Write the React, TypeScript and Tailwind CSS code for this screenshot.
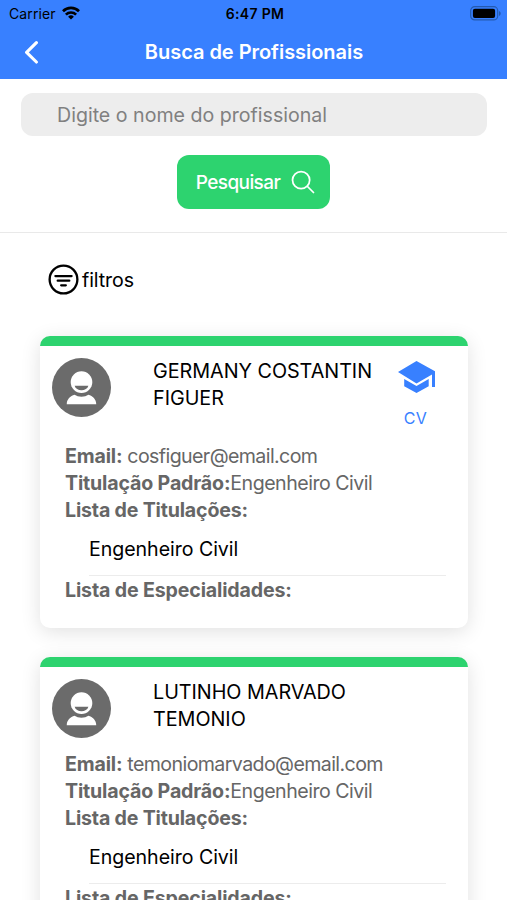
import { IoFilterCircleOutline, IoSearchOutline } from 'react-icons/io5'

type Professional = {
  name: string
  email: string
  degree: string
  hasCv: boolean
}

const professionals: Professional[] = [
  { name: 'GERMANY COSTANTIN FIGUER', email: 'cosfiguer@email.com', degree: 'Engenheiro Civil', hasCv: true },
  { name: 'LUTINHO MARVADO TEMONIO', email: 'temoniomarvado@email.com', degree: 'Engenheiro Civil', hasCv: false },
]

function StatusBar() {
  return (
    <div className="grid h-[27px] grid-cols-3 items-center pl-[9px] pr-[6px] text-[14px] leading-none text-black">
      <div className="flex items-center gap-[6px]">
        <span className="tracking-[0.1px]">Carrier</span>
        <svg viewBox="0 0 18 14" className="-mt-[2px] h-[14px] w-[18px]" fill="none" stroke="currentColor" strokeWidth="2.7">
          <path d="M1 5.200a11.400 11.400 0 0 1 16 0" />
          <path d="M3.900 8.600a7.300 7.300 0 0 1 10.200 0" />
          <path d="M9 13.600 6.100 10.700a4.100 4.100 0 0 1 5.800 0z" fill="currentColor" stroke="none" />
        </svg>
      </div>
      <span className="text-center font-semibold tracking-[0.3px]">6:47 PM</span>
      <svg viewBox="0 0 31 15" className="h-[15px] w-[31px] justify-self-end">
        <rect x="0.700" y="0.700" width="27" height="13.200" rx="4" fill="none" stroke="#245aaf" strokeWidth="1.200" />
        <rect x="2.900" y="2.700" width="22.200" height="9.200" rx="2" fill="#000" />
        <path d="M29 5v5c1-.4 1.700-1.400 1.700-2.500S30 5.400 29 5z" fill="#245aaf" />
      </svg>
    </div>
  )
}

function Avatar() {
  return (
    <svg viewBox="0 0 60 60" className="h-[59px] w-[59px] shrink-0">
      <circle cx="30" cy="30" r="30" fill="#6b6b6b" />
      <circle cx="30" cy="24.500" r="11" fill="#fff" />
      <path d="M23 28.200h14c-.8 3.100-3.700 4.500-7 4.500s-6.200-1.400-7-4.500z" fill="#6b6b6b" />
      <path d="M15 47c0-4.800 3.600-8.600 8-9.600 1.900 1.200 4.200 1.900 7 1.900s5.100-.7 7-1.900c4.400 1 8 4.800 8 9.600z" fill="#fff" />
    </svg>
  )
}

function SchoolIcon() {
  return (
    <svg viewBox="0 0 37 32" className="mt-[3px] h-[32px] w-[37px]" fill="currentColor">
      <path d="M18.500 0 37 10.300V26h-3V13.400L18.500 22.400 0 11z" />
      <path d="m6.200 17.900 12.300 7.200 12.200-7.200v7.300L18.500 32 6.200 25.200z" />
    </svg>
  )
}

function ProfessionalCard({ person }: { person: Professional }) {
  return (
    <article className="h-[292px] overflow-hidden rounded-[10px] border-t-[10px] border-[#2dd36f] bg-white shadow-[0_4px_20px_rgba(0,0,0,0.12)]">
      <div className="flex pl-[12px] pt-[12px]">
        <Avatar />
        <h2 className="ml-[42px] w-[240px] text-[19.800px] leading-[27px] tracking-[-0.04px] text-black">{person.name}</h2>
        {person.hasCv ? (
          <a href="#cv" className="flex h-[84px] w-[46px] flex-col items-center text-[16px] leading-[20px] text-[#3880ff]">
            <SchoolIcon />
            <span className="-ml-px mt-[15px] tracking-[0.300px]">CV</span>
          </a>
        ) : null}
      </div>
      <div className={`pl-[25px] pr-[22px] text-[19.600px] leading-[27px] text-[#666] ${person.hasCv ? 'pt-px' : 'pt-[13px]'}`}>
        <p className="tracking-[-0.600px]"><b className="tracking-[-0.15px]">Email:</b> {person.email}</p>
        <p className="tracking-[-0.500px]"><b className="tracking-[-0.16px]">Titulação Padrão:</b>{person.degree}</p>
        <p><b className="tracking-[-0.18px]">Lista de Titulações:</b></p>
        <div className="ml-[24px] flex h-[52px] items-center border-b border-[#ececec] tracking-[-0.05px] text-black">{person.degree}</div>
        <p className="mt-px"><b className="tracking-[-0.15px]">Lista de Especialidades:</b></p>
      </div>
    </article>
  )
}

export default function App() {
  return (
    <div className="h-[900px] overflow-hidden bg-white font-['Inter','Liberation_Sans',sans-serif]">
      <header className="h-[79px] bg-[#3880ff]">
        <StatusBar />
        <div className="grid h-[50px] grid-cols-[63px_1fr_63px] items-center text-white">
          <svg viewBox="0 0 14 24" className="ml-[24px] h-[24px] w-[14px]" fill="none" stroke="currentColor" strokeWidth="3.1" strokeLinecap="round" strokeLinejoin="round">
            <path d="M12.400 2.600 2.600 12.400l9.800 9.600" />
          </svg>
          <h1 className="pl-px text-center text-[20px] font-semibold tracking-[-0.04px]">Busca de Profissionais</h1>
        </div>
      </header>

      <section className="flex h-[154px] flex-col items-center border-b border-[#e9e9e9] pl-[21px] pr-[20px] pt-[14px]">
        <input
          placeholder="Digite o nome do profissional"
          className="h-[43px] w-full rounded-[12px] bg-[#ededed] px-[36px] text-[19.600px] placeholder:text-[#808080]"
        />
        <button className="mr-px mt-[19px] flex h-[54px] w-[153px] items-center justify-center gap-[9px] rounded-[12px] bg-[#2dd36f] pl-[6px] text-[19px] font-medium tracking-[-0.600px] text-white">
          <span className="pt-[2px]">Pesquisar</span>
          <IoSearchOutline className="-mt-px h-[28px] w-[28px]" />
        </button>
      </section>

      <main>
        <button className="ml-[45px] mt-[28px] flex h-[36px] items-center gap-px text-[19.600px] tracking-[-0.1px] text-black">
          <IoFilterCircleOutline className="h-[37px] w-[37px] shrink-0" />
          <span className="-ml-px pt-[3px]">filtros</span>
        </button>
        <div className="mt-[39px] flex flex-col gap-[29px] pl-[40px] pr-[39px]">
          {professionals.map((person) => (
            <ProfessionalCard key={person.email} person={person} />
          ))}
        </div>
      </main>
    </div>
  )
}
